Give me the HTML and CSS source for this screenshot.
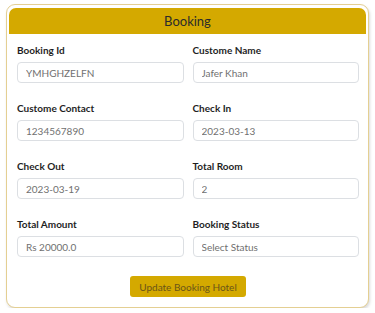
FILE: index.html
```html
<!DOCTYPE html>
<html lang="en">
<head>
  <meta charset="UTF-8">
  <meta name="viewport" content="width=device-width, initial-scale=1.0">
  <title>Booking</title>
  <link rel="stylesheet" href="styles.css">
</head>
<body>

  <div class="tarjeta">
    <div class="cabecera">Booking</div>

    <form class="formulario" name="booking">
      <div class="campo">
        <label for="bookingId">Booking Id</label>
        <input type="text" id="bookingId" value="YMHGHZELFN" readonly>
      </div>
      <div class="campo">
        <label for="customerName">Custome Name</label>
        <input type="text" id="customerName" value="Jafer Khan" readonly>
      </div>

      <div class="campo">
        <label for="contact">Custome Contact</label>
        <input type="text" id="contact" value="1234567890" readonly>
      </div>
      <div class="campo">
        <label for="checkIn">Check In</label>
        <input type="text" id="checkIn" value="2023-03-13" readonly>
      </div>

      <div class="campo">
        <label for="checkOut">Check Out</label>
        <input type="text" id="checkOut" value="2023-03-19" readonly>
      </div>
      <div class="campo">
        <label for="rooms">Total Room</label>
        <input type="text" id="rooms" value="2" readonly>
      </div>

      <div class="campo">
        <label for="amount">Total Amount</label>
        <input type="text" id="amount" value="Rs 20000.0" readonly>
      </div>
      <div class="campo">
        <label for="status">Booking Status</label>
        <select id="status">
          <option value="">Select Status</option>
          <option value="booked">Booked</option>
          <option value="cancelled">Cancelled</option>
        </select>
      </div>

      <div class="acciones">
        <button type="submit">Update Booking Hotel</button>
      </div>
    </form>
  </div>

</body>
</html>
```

FILE: styles.css
```css
/* --- General --- */
body {
  font-family: 'Lato', 'Open Sans', sans-serif;
  background: #ffffff;
  color: #222;
  margin: 0;
  padding: 4px 6px 0 6px;
}

/* --- Card --- */
.tarjeta {
  border: 1px solid #e4cf92;
  border-radius: 9px;
  padding: 3px 2px 0 2px;
  background: #fff;
  box-shadow: 1px 2px 3px rgba(0,0,0,0.15);
}

.cabecera {
  background: #d4a900;
  color: #2b2b2b;
  text-align: center;
  font-size: 13px;
  height: 26px;
  line-height: 26px;
  border-radius: 7px 7px 0 0;
}

/* --- Form grid --- */
.formulario {
  display: grid;
  grid-template-columns: 1fr 1fr;
  column-gap: 9px;
  row-gap: 19px;
  padding: 10px 7px 10px 8px;
}

.campo label {
  display: block;
  font-size: 10px;
  font-weight: bold;
  line-height: 12px;
  margin-bottom: 6px;
  color: #1f1f1f;
}

.campo input,
.campo select {
  display: block;
  width: 100%;
  height: 21px;
  box-sizing: border-box;
  border: 1px solid #dcdfe3;
  border-radius: 4px;
  padding: 0 8px;
  font-family: inherit;
  font-size: 10px;
  color: #707070;
  background: #fff;
  outline: none;
  margin: 0;
}

.campo select {
  appearance: none;
  -webkit-appearance: none;
}

.acciones {
  grid-column: 1 / 3;
  display: flex;
  justify-content: center;
}

button {
  display: block;
  background: #d4a900;
  color: #6a5518;
  border: none;
  border-radius: 3px;
  height: 21px;
  padding: 0 9px;
  font-family: inherit;
  font-size: 10px;
  cursor: pointer;
}
button:hover {
  background: #c29b00;
}
```
